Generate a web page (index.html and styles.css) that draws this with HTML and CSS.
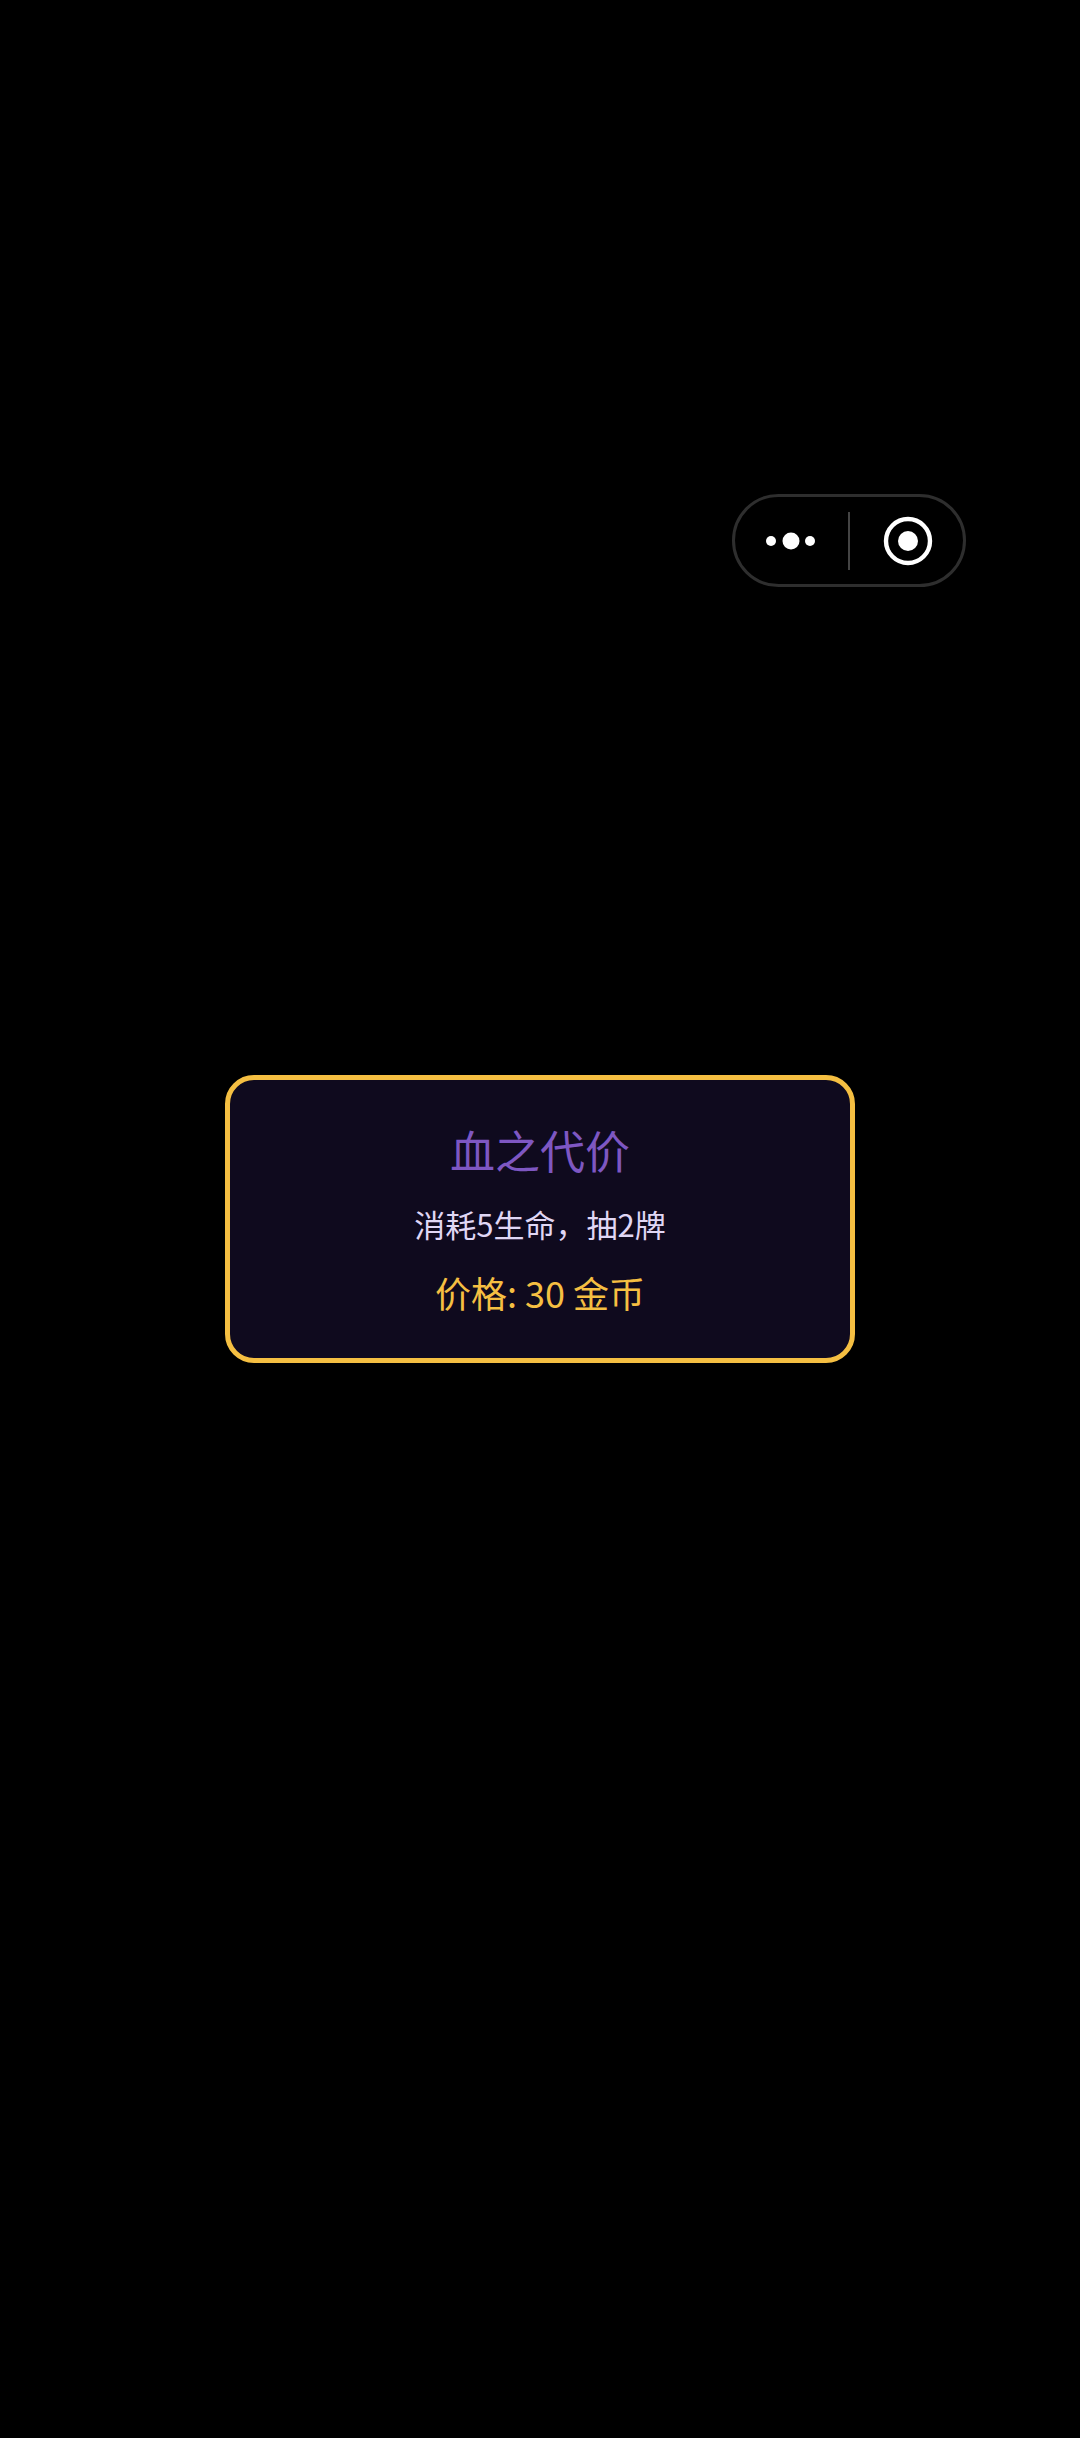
FILE: index.html
```html
<!DOCTYPE html>
<html lang="zh-CN">
<head>
  <meta charset="UTF-8" />
  <meta name="viewport" content="width=device-width, initial-scale=1.0"/>
  <title>商店</title>
  <link rel="stylesheet" href="styles.css">
</head>
<body>
  <div class="capsule">
    <div class="capsule-side">
      <svg width="62" height="20" viewBox="0 0 62 20">
        <circle cx="10" cy="10" r="5" fill="#fff"/>
        <circle cx="30" cy="10" r="8.5" fill="#fff"/>
        <circle cx="49" cy="10" r="5" fill="#fff"/>
      </svg>
    </div>
    <div class="capsule-line"></div>
    <div class="capsule-side">
      <svg class="capsule-record" width="50" height="50" viewBox="0 0 50 50">
        <circle cx="25" cy="25" r="22" fill="none" stroke="#fff" stroke-width="4.4"/>
        <circle cx="25" cy="25" r="10" fill="#fff"/>
      </svg>
    </div>
  </div>

  <div class="card">
    <h2 class="card-name">血之代价</h2>
    <p class="card-desc">消耗5生命，抽2牌</p>
    <p class="card-price">价格: 30 金币</p>
  </div>
</body>
</html>
```

FILE: styles.css
```css
html, body {
  height: 100%;
}

body {
  margin: 0;
  background-color: #000;
  font-family: "Noto Sans CJK SC", "Noto Sans", sans-serif;
  display: flex;
  justify-content: center;
  align-items: center;
}

.capsule {
  position: absolute;
  left: 732px;
  top: 494px;
  width: 234px;
  height: 93px;
  box-sizing: border-box;
  border: 3px solid #2e2e2e;
  border-radius: 47px;
  display: flex;
  align-items: center;
}

.capsule-side {
  flex: 1 1 0;
  display: flex;
  justify-content: center;
  align-items: center;
}

.capsule-record {
  margin-left: 2px;
}

.capsule-line {
  width: 2px;
  height: 58px;
  background-color: #444;
}

.card {
  width: 630px;
  height: 288px;
  box-sizing: border-box;
  padding-bottom: 3px;
  border: 5px solid #f5bf42;
  border-radius: 29px;
  background-color: #0f0a1e;
  display: flex;
  flex-direction: column;
  align-items: center;
  justify-content: center;
  text-align: center;
}

.card-name {
  margin: 0 0 18px;
  font-size: 45px;
  font-weight: 400;
  line-height: 66px;
  color: #7e57c2;
}

.card-desc {
  margin: 0 0 19px;
  font-size: 31px;
  line-height: 46px;
  color: #e0d7f5;
}

.card-price {
  margin: 0;
  font-size: 36px;
  line-height: 52px;
  color: #f5bf42;
}
```
